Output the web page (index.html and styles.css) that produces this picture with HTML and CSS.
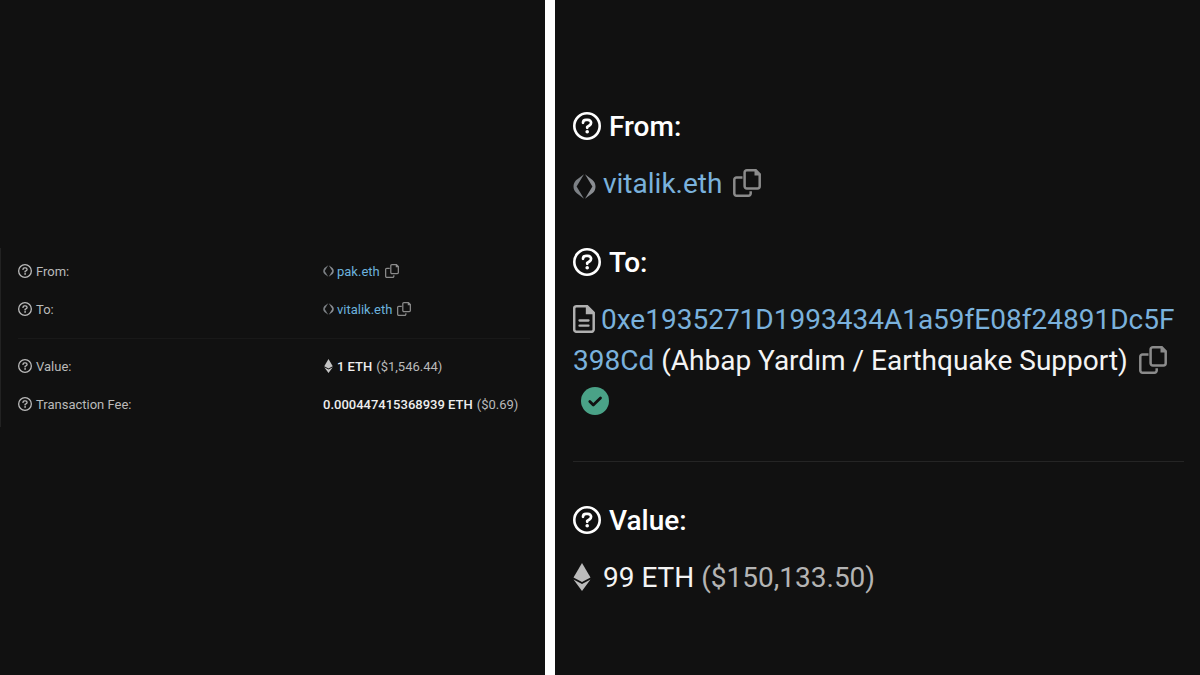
FILE: index.html
```html
<!DOCTYPE html>
<html lang="en">
<head>
  <meta charset="UTF-8" />
  <meta name="viewport" content="width=device-width, initial-scale=1.0"/>
  <title>Transaction Details</title>
  <link rel="stylesheet" href="styles.css">
</head>
<body>

  <!-- Shared icons -->
  <svg class="icon-defs" aria-hidden="true">
    <symbol id="help" viewBox="0 0 28 28">
      <circle cx="14" cy="14" r="12.7" fill="none" stroke="currentColor" stroke-width="2.6"/>
      <path d="M10 10.800c0-1.800 1.300-3 3-3h1.900c1.800 0 3.200 1.300 3.200 3 0 1.200-.7 2.100-1.700 2.700L14.200 14.800v1" fill="none" stroke="currentColor" stroke-width="2.700" stroke-linecap="round" stroke-linejoin="round"/>
      <circle cx="14.200" cy="19.800" r="1.800" fill="currentColor"/>
    </symbol>
    <symbol id="copy" viewBox="0 0 28 28">
      <path d="M9.500 8.500H3.500a2.200 2.200 0 0 0-2.200 2.200v13.800a2.200 2.200 0 0 0 2.200 2.200h12a2.200 2.200 0 0 0 2.200-2.200v-2.200" fill="none" stroke="currentColor" stroke-width="2.500"/>
      <path d="M13.800 1.300h9l3.900 3.900v12a2.200 2.200 0 0 1-2.200 2.200H13.800a2.200 2.200 0 0 1-2.200-2.200V3.500a2.200 2.200 0 0 1 2.200-2.200z" fill="none" stroke="currentColor" stroke-width="2.500"/>
      <path d="M21.500 1v5.500H27V5L23 1z" fill="currentColor"/>
    </symbol>
    <symbol id="ens" viewBox="0 0 23 25">
      <path d="M11 .3L3.600 12.500 11 24.700 3.800 19.300C1.600 17.600.5 15 .5 12.500S1.300 8 3 6.200z" fill="#7c8085"/>
      <path d="M12 .3l7.200 5.400c2.200 1.700 3.300 4.300 3.300 6.800s-.8 4.500-2.500 6.300L12 24.700l7.400-12.200z" fill="#8a8d92"/>
    </symbol>
    <symbol id="eth" viewBox="0 0 18 28">
      <path d="M9 0l8.500 14.500L9 19 .5 14.500z" fill="currentColor"/>
      <path d="M.5 16.500L9 21l8.500-4.500L9 28z" fill="currentColor"/>
    </symbol>
    <symbol id="file" viewBox="0 0 22 28">
      <path d="M3.500 1.300h10.700l6.500 6.500v16.700a2.300 2.300 0 0 1-2.300 2.300H3.500a2.300 2.300 0 0 1-2.300-2.300V3.600a2.300 2.300 0 0 1 2.300-2.300z" fill="none" stroke="currentColor" stroke-width="2.500"/>
      <path d="M12.800 1v8.200H21V7.300L14.700 1z" fill="currentColor"/>
      <path d="M6.500 15.500h9M6.500 20.700h9" stroke="currentColor" stroke-width="2.300" stroke-linecap="round"/>
    </symbol>
    <symbol id="check" viewBox="0 0 28 28">
      <circle cx="14" cy="14" r="14" fill="#4aa287"/>
      <path d="M8.800 14.500l3.500 3.500 7.200-7" fill="none" stroke="#111" stroke-width="2.800" stroke-linecap="round" stroke-linejoin="round"/>
    </symbol>
  </svg>

  <main class="compare">
    <section class="panel panel-small">
      <div class="card">
        <dl class="rows">
          <div class="row">
            <dt><svg class="icon"><use href="#help"/></svg>From:</dt>
            <dd>
              <svg class="icon ens"><use href="#ens"/></svg><a href="#pak">pak.eth</a>
              <button class="copy" aria-label="Copy address"><svg class="icon"><use href="#copy"/></svg></button>
            </dd>
          </div>
          <div class="row">
            <dt><svg class="icon"><use href="#help"/></svg>To:</dt>
            <dd>
              <svg class="icon ens"><use href="#ens"/></svg><a href="#vitalik">vitalik.eth</a>
              <button class="copy" aria-label="Copy address"><svg class="icon"><use href="#copy"/></svg></button>
            </dd>
          </div>
        </dl>
        <hr>
        <dl class="rows">
          <div class="row">
            <dt><svg class="icon"><use href="#help"/></svg>Value:</dt>
            <dd><svg class="icon eth"><use href="#eth"/></svg><span class="amount">1 ETH</span> <span class="usd">($1,546.44)</span></dd>
          </div>
          <div class="row">
            <dt><svg class="icon"><use href="#help"/></svg>Transaction Fee:</dt>
            <dd><span class="amount">0.000447415368939 ETH</span> <span class="usd">($0.69)</span></dd>
          </div>
        </dl>
      </div>
    </section>

    <section class="panel panel-large">
      <dl class="rows">
        <div class="row">
          <dt><svg class="icon"><use href="#help"/></svg>From:</dt>
          <dd>
            <svg class="icon ens"><use href="#ens"/></svg><a href="#vitalik">vitalik.eth</a>
            <button class="copy" aria-label="Copy address"><svg class="icon"><use href="#copy"/></svg></button>
          </dd>
        </div>
        <div class="row">
          <dt><svg class="icon"><use href="#help"/></svg>To:</dt>
          <dd>
            <svg class="icon file"><use href="#file"/></svg><a class="address" href="#contract">0xe1935271D1993434A1a59fE08f24891Dc5F398Cd</a>
            (Ahbap Yardım / Earthquake Support)
            <button class="copy" aria-label="Copy address"><svg class="icon"><use href="#copy"/></svg></button>
            <svg class="icon check" role="img" aria-label="Success"><use href="#check"/></svg>
          </dd>
        </div>
      </dl>
      <hr>
      <dl class="rows">
        <div class="row">
          <dt><svg class="icon"><use href="#help"/></svg>Value:</dt>
          <dd><svg class="icon eth"><use href="#eth"/></svg><span class="amount">99 ETH</span> <span class="usd">($150,133.50)</span></dd>
        </div>
      </dl>
    </section>
  </main>

</body>
</html>
```
FILE: styles.css
```css
* {
  box-sizing: border-box;
}
body {
  margin: 0;
  font-family: Roboto, sans-serif;
  background-color: #fff;
}
dl, dd {
  margin: 0;
}
a {
  color: #7ab1dc;
  text-decoration: none;
}
hr {
  border: none;
  height: 1px;
}
.icon-defs {
  position: absolute;
  width: 0;
  height: 0;
}

/* Two panels with a white bar between them */
.compare {
  display: grid;
  grid-template-columns: 545fr 645fr;
  gap: 10px;
  min-height: 100vh;
}
.panel {
  min-width: 0;
  background-color: #111;
}
.copy {
  padding: 0;
  border: none;
  background: none;
  color: #8b8b8b;
  font: inherit;
  line-height: 1;
  cursor: pointer;
}

/* Desktop view */
.panel-small {
  display: flex;
  align-items: center;
  font-size: 13px;
  color: #bababa;
}
.card {
  flex: 1;
  padding: 4px 15px 4px 17px;
  border-left: 1px solid #222;
}
.panel-small .row {
  display: grid;
  grid-template-columns: 305fr 207fr;
  height: 38px;
}
.panel-small dt,
.panel-small dd {
  display: flex;
  align-items: center;
  gap: 4px;
  white-space: nowrap;
}
.panel-small dd {
  gap: 3px;
}
.panel-small .icon {
  display: block;
  width: 14px;
  height: 14px;
}
.panel-small .ens {
  width: 11px;
}
.panel-small .eth {
  width: 11px;
  color: #c4c4c4;
}
.panel-small .copy {
  margin-left: 2px;
}
.panel-small hr {
  margin: 10px 0 8px;
  background-color: #191919;
}
.panel-small a {
  color: #6cb2dd;
}
.panel-small .amount {
  font-weight: 500;
  color: #eee;
}
.panel-small .usd {
  margin-left: 1px;
}

/* Mobile view */
.panel-large {
  padding: 106px 16px 40px 18px;
  font-size: 28px;
  line-height: 41px;
  color: #f4f4f4;
}
.panel-large .row + .row {
  margin-top: 38px;
}
.panel-large dt {
  display: flex;
  align-items: center;
  gap: 8px;
  margin-bottom: 16px;
  font-weight: 500;
  color: #fff;
}
.panel-large .icon {
  width: 28px;
  height: 28px;
  vertical-align: -4px;
}
.panel-large dt .icon {
  margin-bottom: 2px;
}
.panel-large .ens {
  width: 23px;
  height: 25px;
  margin-right: 7px;
  vertical-align: -6px;
}
.panel-large .file {
  width: 22px;
  margin-right: 6px;
  color: #b0b0b0;
}
.panel-large .eth {
  width: 18px;
  margin-right: 12px;
  color: #bbb;
}
.panel-large .copy {
  margin-left: 4px;
}
.panel-large .check {
  margin-left: 8px;
}
.panel-large .address {
  word-break: break-all;
}
.panel-large hr {
  margin: 39px 0 38px;
  background-color: #252525;
}
.panel-large .usd {
  color: #b4b4b4;
}
```
